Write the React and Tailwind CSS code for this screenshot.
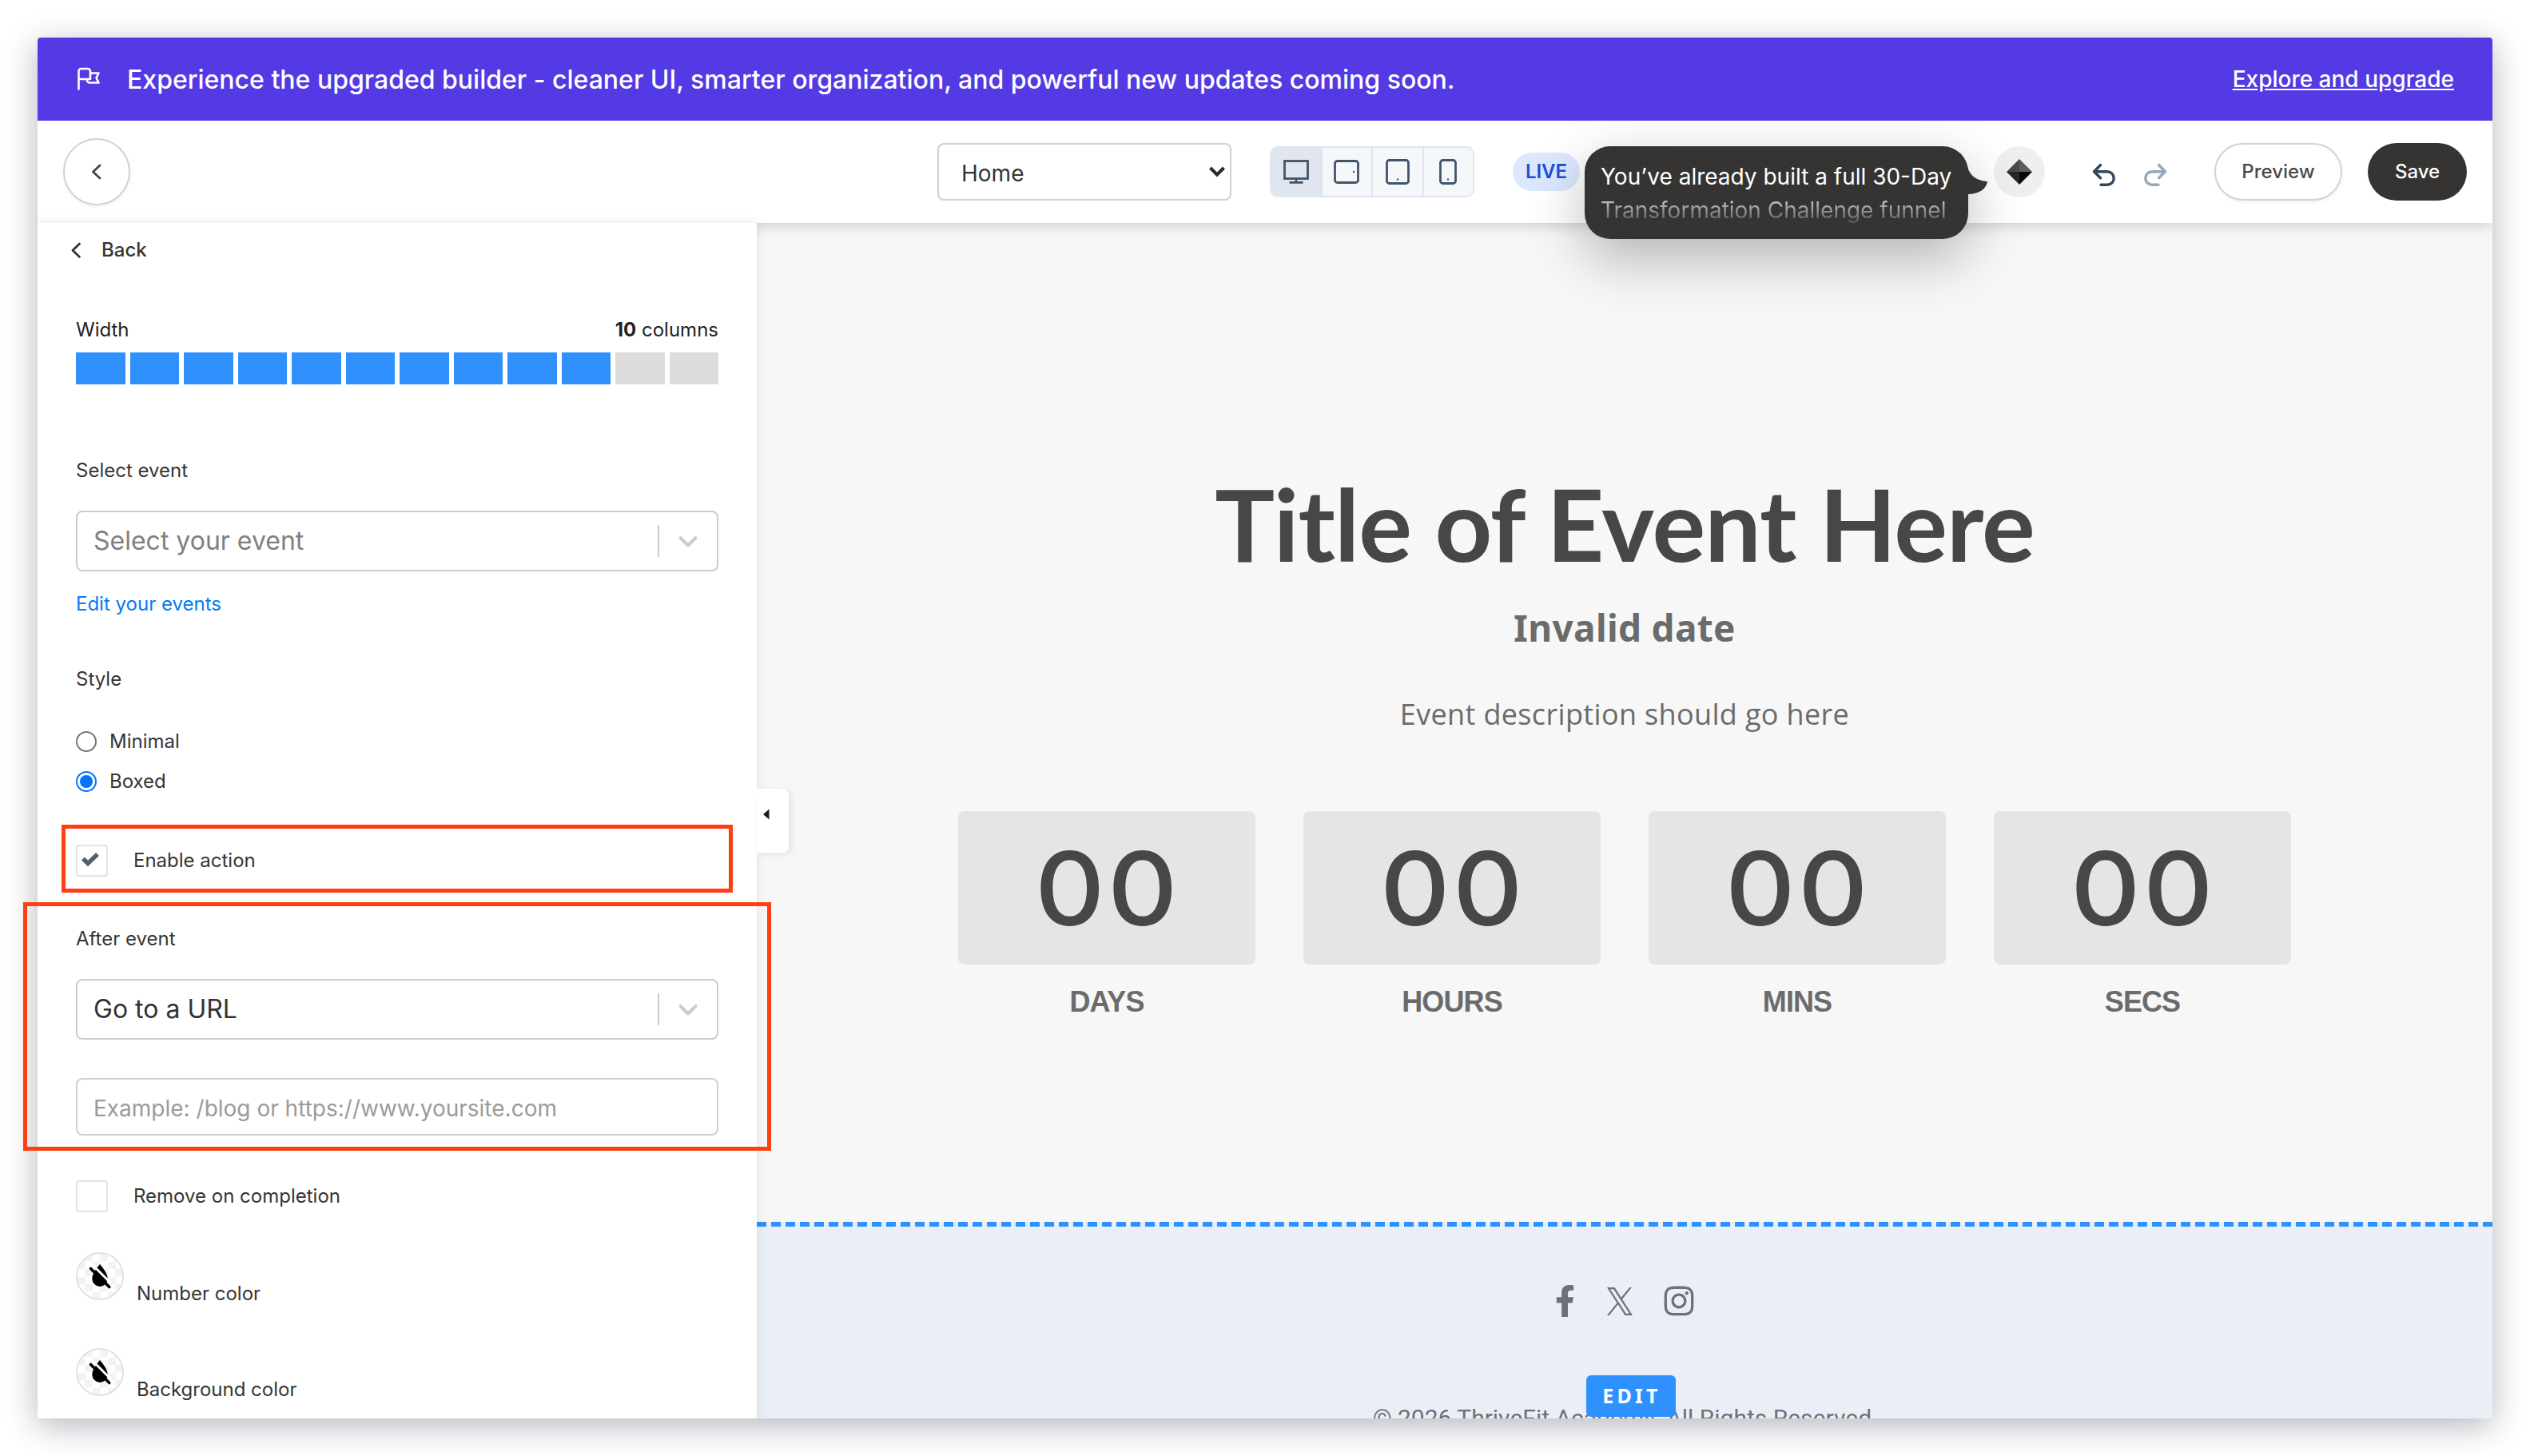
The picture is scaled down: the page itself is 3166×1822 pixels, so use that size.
import { FaFacebookF, FaInstagram } from 'react-icons/fa'

const columns = Array.from({ length: 12 }, (_, i) => i < 10)

const counters = ['DAYS', 'HOURS', 'MINS', 'SECS']

const devices = [
  {
    name: 'desktop',
    icon: (
      <>
        <rect x="1.5" y="2.5" width="29" height="22" />
        <path d="M16 25v4M7.5 29.3h17" />
      </>
    ),
  },
  {
    name: 'landscape',
    icon: (
      <>
        <rect x="1.5" y="2.5" width="29" height="27" rx="3" />
        <circle cx="25" cy="16" r="1.2" fill="currentColor" stroke="none" />
      </>
    ),
  },
  {
    name: 'tablet',
    icon: (
      <>
        <rect x="2.5" y="1.5" width="27" height="29" rx="3" />
        <circle cx="16" cy="25.5" r="1.2" fill="currentColor" stroke="none" />
      </>
    ),
  },
  {
    name: 'phone',
    icon: (
      <>
        <rect x="6.5" y="1.5" width="19" height="29" rx="3" />
        <circle cx="16" cy="25.5" r="1.2" fill="currentColor" stroke="none" />
      </>
    ),
  },
]

function Banner() {
  return (
    <div className="relative z-20 flex h-[104px] shrink-0 items-center justify-between bg-[#533ae5] pl-[48px] pr-[48px] font-medium text-white">
      <div className="flex items-center">
        <svg width="32" height="32" viewBox="0 0 32 32" fill="none" stroke="currentColor" strokeWidth="2.6" strokeLinecap="round" strokeLinejoin="round">
          <path d="M3.5 28.5V6a3 3 0 0 1 3-3H15a3 3 0 0 1 3 3v10H3.5" />
          <path d="M18 8.5h10.5l-3 6 3 6H17a3 3 0 0 1-3-3V16" />
        </svg>
        <p className="ml-[32px] pt-[2px] text-[32px]">
          Experience the upgraded builder - cleaner UI, smarter organization, and powerful new updates coming soon.
        </p>
      </div>
      <a href="#" className="text-[28px] underline">Explore and upgrade</a>
    </div>
  )
}

function Assistant() {
  return (
    <div className="relative ml-auto flex size-16 items-center justify-center rounded-full bg-[#efefef]">
      <svg width="32" height="32" viewBox="0 0 32 32">
        <path d="M16 0 0 16h16z" fill="#4a4a4a" />
        <path d="m16 0 16 16H16z" fill="#5c5c5c" />
        <path d="m0 16 16 16V16z" fill="#262626" />
        <path d="m32 16-16 16V16z" fill="#080808" />
      </svg>
      <div className="absolute right-[96px] top-0 h-[116px] w-[480px] rounded-[32px] bg-[#353432] px-[20px] pt-[17px] text-[28px] leading-[42px] text-white shadow-[0_24px_70px_rgba(0,0,0,0.28)]">
        <p className="whitespace-nowrap">You’ve already built a full 30-Day</p>
        <p className="whitespace-nowrap bg-linear-to-b from-[#dcdcdc] from-10% to-[#555453] to-90% bg-clip-text text-transparent">
          Transformation Challenge funnel
        </p>
        <svg className="absolute -right-[24px] top-[26px]" width="25" height="35" viewBox="0 0 25 35" fill="#353432">
          <path d="M0 0c4 12 12 17 25 18-1 9-10 16-25 16z" />
        </svg>
      </div>
    </div>
  )
}

function Toolbar() {
  return (
    <div className="relative z-10 flex h-[128px] shrink-0 items-center bg-white px-[32px] shadow-[0_4px_16px_rgba(0,0,0,0.16)]">
      <button className="flex size-[84px] items-center justify-center rounded-full border-2 border-[#d2d2d2] shadow-[0_2px_4px_rgba(0,0,0,0.06)]">
        <svg width="24" height="24" viewBox="0 0 24 24" fill="none" stroke="#444" strokeWidth="2.8" strokeLinecap="round" strokeLinejoin="round">
          <path d="m16 4-8.5 8L16 20" />
        </svg>
      </button>

      <div className="ml-[1010px] flex h-[72px] w-[368px] items-center justify-between rounded-lg border-2 border-[#d0d0d0] pl-[28px] pr-[6px] text-[28px] text-[#353432]">
        <span className="pt-1">Home</span>
        <svg width="20" height="14" viewBox="0 0 20 14" fill="none" stroke="#2d2d2d" strokeWidth="4.2">
          <path d="m1.5 2 8.5 8.5L18.5 2" />
        </svg>
      </div>

      <div className="ml-[48px] flex h-16 w-[256px] divide-x-2 divide-[#dfe6f0] overflow-hidden rounded-[10px] border-2 border-[#dfe6f0] bg-[#f5f8fb] text-[#42546a]">
        {devices.map(d => (
          <div key={d.name} className="flex flex-1 items-center justify-center first:bg-[#dfe6f0]">
            <svg width="32" height="32" viewBox="0 0 32 32" fill="none" stroke="currentColor" strokeWidth="2.8">{d.icon}</svg>
          </div>
        ))}
      </div>

      <span className="ml-[48px] flex h-12 w-[84px] items-center justify-center rounded-full bg-[#dbe8fe] text-[24px] font-semibold text-[#1f4fd8]">LIVE</span>

      <Assistant />

      <div className="ml-[58px] flex gap-[32px] pt-[8px]">
        <svg width="32" height="32" viewBox="0 0 32 32" fill="none" stroke="#33475b" strokeWidth="3.4" strokeLinecap="round" strokeLinejoin="round">
          <path d="M11.5 3.5 3.5 11.7l8 8.1M3.5 11.7H20a8.25 8.25 0 0 1 0 16.5h-8" />
        </svg>
        <svg width="32" height="32" viewBox="0 0 32 32" fill="none" stroke="#96a7b8" strokeWidth="3.4" strokeLinecap="round" strokeLinejoin="round">
          <path d="m20.5 3.5 8 8.2-8 8.1M28.5 11.7H12a8.25 8.25 0 0 0 0 16.5h8" />
        </svg>
      </div>

      <button className="ml-[58px] h-[72px] w-[160px] rounded-full border-2 border-[#d2d2d2] text-[24px] font-medium text-[#4a4a4a] shadow-[0_2px_4px_rgba(0,0,0,0.06)]">Preview</button>
      <button className="ml-[32px] h-[72px] w-[124px] rounded-full bg-[#353432] text-[24px] font-medium text-white">Save</button>
    </div>
  )
}

function SelectBox({ children, muted }) {
  return (
    <div className="flex h-[76px] shrink-0 items-center rounded-lg border-2 border-[#cccccc] pl-[20px] text-[32px]">
      <span className={muted ? 'flex-1 text-[#808080]' : 'flex-1 text-[#333333]'}>{children}</span>
      <span className="h-10 w-[2px] bg-[#cccccc]" />
      <svg className="mx-[22px] mt-[2px]" width="28" height="16" viewBox="0 0 28 16" fill="none" stroke="#cccccc" strokeWidth="4" strokeLinecap="round" strokeLinejoin="round">
        <path d="m4.5 3 9.5 9.5L23.5 3" />
      </svg>
    </div>
  )
}

function Checkbox({ label, checked }) {
  return (
    <label className="flex h-10 shrink-0 items-center gap-[32px]">
      <span className="flex size-10 items-center justify-center rounded-[4px] border-2 border-[#e2e2e2]">
        {checked && (
          <svg className="-mt-[4px] -ml-[4px]" width="24" height="20" viewBox="0 0 24 20" fill="none" stroke="#4f6072" strokeWidth="5.4">
            <path d="m3 9.5 6 6L21 4" />
          </svg>
        )}
      </span>
      <span>{label}</span>
    </label>
  )
}

function Radio({ label, checked }) {
  return (
    <label className="flex h-[26px] shrink-0 items-center gap-[16px]">
      <span className={checked ? 'flex size-[26px] items-center justify-center rounded-full border-[2.5px] border-[#0075ff]' : 'flex size-[26px] rounded-full border-2 border-[#767676]'}>
        {checked && <span className="size-4 rounded-full bg-[#0075ff]" />}
      </span>
      <span>{label}</span>
    </label>
  )
}

function ColorField({ label }) {
  return (
    <div className="flex h-[60px] shrink-0 items-start gap-[16px]">
      <div className="flex size-[60px] items-center justify-center overflow-hidden rounded-full border-2 border-[#e2e2e2] bg-[conic-gradient(#f3f3f3_25%,#fff_0_50%,#f3f3f3_0_75%,#fff_0)] bg-[length:19px_19px]">
        <svg width="60" height="60" viewBox="0 0 60 60" className="shrink-0">
          <path d="M30 15c5 6 9.7 12.5 9.7 18.2a9.7 9.7 0 0 1-19.4 0C20.3 27.5 25 21 30 15z" fill="#000" />
          <path d="m21 16 23 23" stroke="#fff" strokeWidth="3" />
          <path d="m18.5 20.5 23.3 23" stroke="#000" strokeWidth="3.6" strokeLinecap="round" />
        </svg>
      </div>
      <span className="pt-[36px] leading-[32px]">{label}</span>
    </div>
  )
}

function Sidebar() {
  return (
    <aside className="relative z-20 w-[900px] shrink-0 bg-white shadow-[0_0_12px_rgba(0,0,0,0.1)]">
      <div className="flex h-full flex-col overflow-hidden px-[48px] pt-[18px] text-[24px] leading-[32px] text-[#353535]">
        <div className="flex h-8 shrink-0 items-center font-medium">
          <svg className="-ml-[12px]" width="24" height="24" viewBox="0 0 24 24" fill="none" stroke="#333" strokeWidth="2.8" strokeLinecap="round" strokeLinejoin="round">
            <path d="m16.5 4-8.5 8.2 8.5 8.2" />
          </svg>
          <span className="ml-[20px]">Back</span>
        </div>

        <div className="mt-[68px] flex h-8 shrink-0 items-center justify-between text-[#222222]">
          <span>Width</span>
          <span><b>10</b> columns</span>
        </div>
        <div className="mt-[12px] flex h-10 shrink-0 gap-[6px]">
          {columns.map((on, i) => (
            <span key={i} className={on ? 'flex-1 bg-[#2f91fd]' : 'flex-1 bg-[#dcdcdc]'} />
          ))}
        </div>

        <p className="mt-[92px]">Select event</p>
        <div className="mt-[34px] flex flex-col">
          <SelectBox muted>Select your event</SelectBox>
        </div>
        <a href="#" className="mt-[25px] text-[#007bf5]">Edit your events</a>

        <p className="mt-[62px]">Style</p>
        <div className="mt-[49px] flex flex-col gap-[24px]">
          <Radio label="Minimal" />
          <Radio label="Boxed" checked />
        </div>

        <div className="mt-[66px]">
          <Checkbox label="Enable action" checked />
        </div>

        <p className="mt-[62px]">After event</p>
        <div className="mt-[34px] flex flex-col">
          <SelectBox>Go to a URL</SelectBox>
        </div>
        <input
          className="mt-[48px] h-[72px] shrink-0 rounded-lg border-2 border-[#d0d0d0] px-[20px] pt-[4px] text-[28px] placeholder:text-[#9b9b9b]"
          placeholder="Example: /blog or https://www.yoursite.com"
        />

        <div className="mt-[56px]">
          <Checkbox label="Remove on completion" />
        </div>

        <div className="mt-[50px] flex flex-col gap-[60px]">
          <ColorField label="Number color" />
          <ColorField label="Background color" />
        </div>
      </div>

      {/* collapse handle */}
      <div className="absolute left-full top-[708px] flex h-20 w-10 items-start rounded-r-lg bg-white pl-[8px] pt-[25px] shadow-[4px_2px_8px_rgba(0,0,0,0.08)]">
        <svg width="8" height="14" viewBox="0 0 8 14">
          <path d="M7.5 0.5v13L0 7z" fill="#1d1d1d" />
        </svg>
      </div>
    </aside>
  )
}

function Canvas() {
  return (
    <main className="flex flex-1 flex-col overflow-hidden bg-[#f7f7f7]">
      <section className="flex h-[1250px] shrink-0 flex-col items-center">
        <h1 className="mt-[296px] font-['Lato'] text-[125px] font-bold leading-[160px] tracking-[-0.95px] text-[#474747]">Title of Event Here</h1>
        <h2 className="mt-[20px] font-['Noto_Sans'] text-[46px] font-bold leading-[60px] tracking-[0.3px] text-[#6b6b6b]">Invalid date</h2>
        <p className="mt-[55px] font-['Open_Sans'] text-[36px] leading-[48px] tracking-[0.35px] text-[#6b6b6b]">Event description should go here</p>

        <div className="mt-[97px] grid w-[1668px] grid-cols-4 gap-[60px]">
          {counters.map(label => (
            <div key={label} className="text-center">
              <div className="flex h-[192px] items-center justify-center rounded-lg bg-[#e5e5e5]">
                <span className="scale-x-[1.06] pl-[3px] pt-[2px] text-[128px] font-[530] leading-none tracking-[3.4px] text-[#474747]">00</span>
              </div>
              <p className="mt-[27px] font-['Liberation_Sans'] text-[36px] font-bold leading-[40px] tracking-[-0.9px] text-[#6b6b6b]">{label}</p>
            </div>
          ))}
        </div>
      </section>

      <footer className="relative flex flex-1 flex-col items-center border-t-[6px] border-dashed border-[#2f91fd] bg-[#eaeff7] text-[#6c7177]">
        <div className="mt-[72px] ml-[2px] flex h-[42px] items-center">
          <FaFacebookF className="h-[40px] w-[25px]" />
          <svg className="ml-[40px]" width="32" height="35" viewBox="0 0 300 301" preserveAspectRatio="none" fill="currentColor">
            <path d="M178.57 127.15 290.27 0h-26.46l-97.03 110.38L89.34 0H0l117.13 166.93L0 300.25h26.46l102.4-116.59 81.8 116.59H300M36.01 19.54h40.65l187.13 262.13h-40.66" />
          </svg>
          <FaInstagram className="ml-[37px] h-[42px] w-[42px]" />
        </div>
        <p className="mt-[106px] -ml-[6px] whitespace-nowrap font-['Roboto'] text-[30px] leading-[40px]">© 2026 ThriveFit Academy. All Rights Reserved</p>
        <button className="absolute left-[1038px] top-[186px] h-[52px] w-[112px] rounded-md bg-[#2f91fd] pl-[2px] font-['Noto_Sans'] text-[25px] font-bold tracking-[4.2px] text-white">EDIT</button>
      </footer>
    </main>
  )
}

export default function App() {
  return (
    <div className="h-[1822px] w-[3166px] overflow-hidden bg-white p-[47px] font-['Inter',sans-serif]">
      <div className="relative h-[1728px] w-[3072px] rounded-[4px] shadow-[0_9px_40px_rgba(20,25,45,0.32)]">
        <div className="flex h-full flex-col overflow-hidden rounded-[4px]">
          <Banner />
          <Toolbar />
          <div className="flex min-h-0 flex-1">
            <Sidebar />
            <Canvas />
          </div>
        </div>

        {/* callout frames over the sidebar */}
        <div className="pointer-events-none absolute left-[30px] top-[985px] z-30 h-[85px] w-[840px] border-[5px] border-[#ff3e14]" />
        <div className="pointer-events-none absolute -left-[18px] top-[1082px] z-30 h-[311px] w-[936px] border-[5px] border-[#ff3e14]" />
      </div>
    </div>
  )
}
